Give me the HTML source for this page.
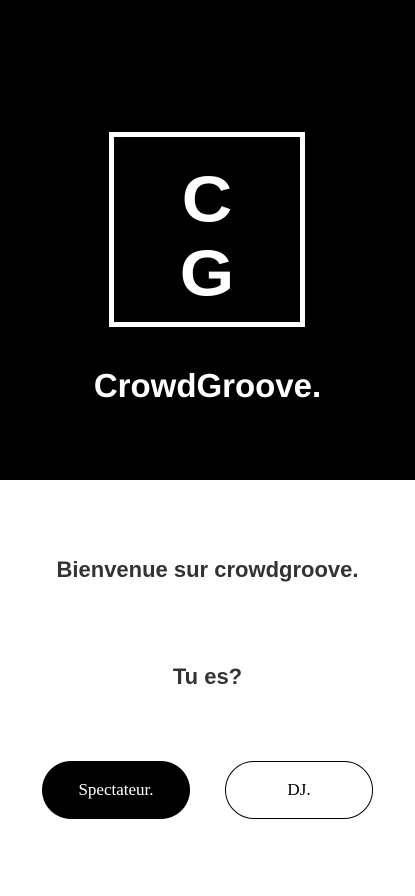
<!DOCTYPE html>
<html><head><meta charset="utf-8"><style>
html,body{margin:0;padding:0;width:415px;height:896px;background:#fff;overflow:hidden;font-family:"Liberation Sans",sans-serif}
.top{position:absolute;left:0;top:0;width:415px;height:480px;background:#000}
.box{position:absolute;left:109px;top:132px;width:186px;height:185px;border:5px solid #fff}
.l{position:absolute;left:0;width:100%;text-align:center;color:#fff;font-weight:bold;font-size:70px;line-height:70px;transform:scaleY(0.93)}
.title{position:absolute;top:364px;left:0;width:415px;text-align:center;color:#fff;font-weight:bold;font-size:33px;line-height:44px}
.t{position:absolute;left:0;width:415px;text-align:center;color:#333;font-weight:bold;font-size:22px}
.btn{position:absolute;top:761px;width:148px;height:58px;border-radius:29px;box-sizing:border-box;font-family:"Liberation Serif",serif;font-size:17px;line-height:58px;text-align:center}
</style></head><body>
<div class="top">
<div class="box">
<div class="l" style="top:27px">C</div>
<div class="l" style="top:101px">G</div>
</div>
<div class="title">CrowdGroove.</div>
</div>
<div class="t" style="top:557px">Bienvenue sur crowdgroove.</div>
<div class="t" style="top:664px">Tu es?</div>
<div class="btn" style="left:42px;background:#000;color:#fff">Spectateur.</div>
<div class="btn" style="left:225px;border:1.5px solid #000;color:#000;line-height:55px">DJ.</div>
</body></html>
